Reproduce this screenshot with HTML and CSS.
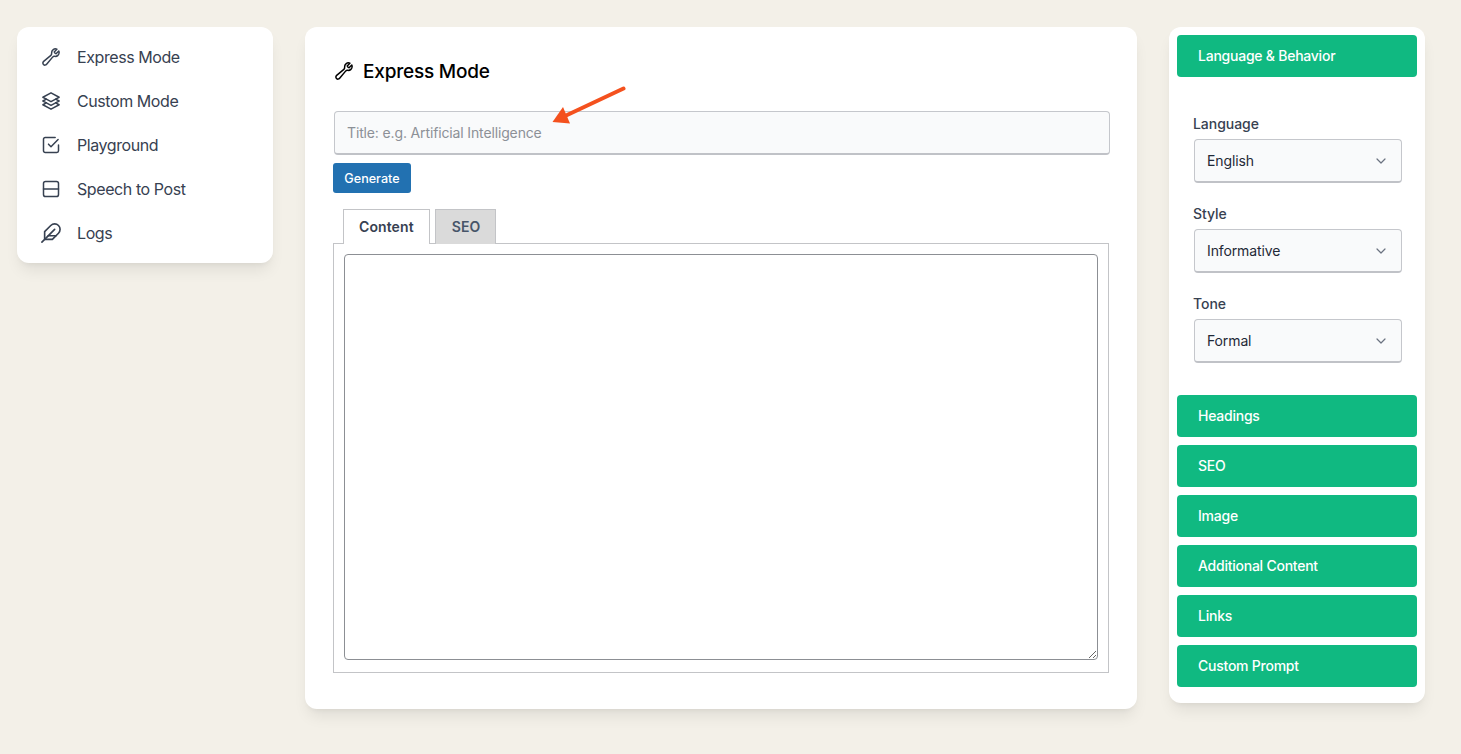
FILE: index.html
```html
<!DOCTYPE html>
<html lang="en">
<head>
<meta charset="utf-8">
<title>Express Mode</title>
<link rel="stylesheet" href="styles.css">
</head>
<body>
<div class="layout">
  <nav class="card sidebar">
    <a class="nav-item"><svg class="icon" viewBox="0 0 24 24"><path d="M21.75 6.75a4.5 4.5 0 01-4.884 4.484c-1.076-.091-2.264.071-2.95.904l-7.152 8.684a2.548 2.548 0 11-3.586-3.586l8.684-7.152c.833-.686.995-1.874.904-2.95a4.5 4.5 0 016.336-4.486l-3.276 3.276a3.004 3.004 0 002.25 2.25l3.276-3.276c.256.565.398 1.192.398 1.852z"/></svg><span>Express Mode</span></a>
    <a class="nav-item"><svg class="icon" viewBox="0 0 24 24"><path d="M6.429 9.75L2.25 12l4.179 2.25m0-4.5l5.571 3 5.571-3m-11.142 0L2.25 7.5 12 2.25l9.75 5.25-4.179 2.25m0 0L21.75 12l-4.179 2.25m0 0l4.179 2.25L12 21.75 2.25 16.5l4.179-2.25m11.142 0l-5.571 3-5.571-3"/></svg><span>Custom Mode</span></a>
    <a class="nav-item"><svg class="icon" viewBox="0 0 24 24"><path d="M9 11l3 3 8.5-8.5"/><path d="M21 12v7a2 2 0 01-2 2H5a2 2 0 01-2-2V5a2 2 0 012-2h12"/></svg><span>Playground</span></a>
    <a class="nav-item"><svg class="icon" viewBox="0 0 24 24"><rect x="3" y="3" width="18" height="18" rx="2.5"/><path d="M3 12h18"/></svg><span>Speech to Post</span></a>
    <a class="nav-item"><svg class="icon" viewBox="1 1 22 22"><path d="M20.24 12.24a6 6 0 0 0-8.49-8.49L5 10.5V19h8.5z"/><path d="M16 8 2 22"/><path d="M17.5 15H9"/></svg><span>Logs</span></a>
  </nav>

  <main class="card main">
    <h1 class="title"><svg class="icon" viewBox="0 0 24 24"><path d="M21.75 6.75a4.5 4.5 0 01-4.884 4.484c-1.076-.091-2.264.071-2.95.904l-7.152 8.684a2.548 2.548 0 11-3.586-3.586l8.684-7.152c.833-.686.995-1.874.904-2.95a4.5 4.5 0 016.336-4.486l-3.276 3.276a3.004 3.004 0 002.25 2.25l3.276-3.276c.256.565.398 1.192.398 1.852z"/></svg>Express Mode</h1>
    <div class="title-field">
      <input class="title-input" type="text" placeholder="Title: e.g. Artificial Intelligence">
      <svg class="arrow" viewBox="0 0 80 44" width="80" height="44"><path class="arrow-line" d="M71.5 2.5 13 30"/><path class="arrow-head" d="M0.5 36 11 21 18 37.5z"/></svg>
    </div>
    <button class="generate" type="button">Generate</button>
    <div class="tabs">
      <div class="tab active">Content</div>
      <div class="tab">SEO</div>
    </div>
    <div class="tab-panel"><textarea class="editor"></textarea></div>
  </main>

  <aside class="card settings">
    <div class="acc">Language &amp; Behavior</div>
    <div class="fields">
      <div class="field">
        <label class="field-label">Language</label>
        <div class="select-wrap"><select class="select"><option>English</option></select><svg class="chevron" viewBox="0 0 20 20"><path d="M5 7.5l5 5 5-5"/></svg></div>
      </div>
      <div class="field">
        <label class="field-label">Style</label>
        <div class="select-wrap"><select class="select"><option>Informative</option></select><svg class="chevron" viewBox="0 0 20 20"><path d="M5 7.5l5 5 5-5"/></svg></div>
      </div>
      <div class="field">
        <label class="field-label">Tone</label>
        <div class="select-wrap"><select class="select"><option>Formal</option></select><svg class="chevron" viewBox="0 0 20 20"><path d="M5 7.5l5 5 5-5"/></svg></div>
      </div>
    </div>
    <div class="acc-list">
      <div class="acc">Headings</div>
      <div class="acc">SEO</div>
      <div class="acc">Image</div>
      <div class="acc">Additional Content</div>
      <div class="acc">Links</div>
      <div class="acc">Custom Prompt</div>
    </div>
  </aside>
</div>
</body>
</html>
```

FILE: styles.css
```css
* { box-sizing: border-box; }
html, body { margin: 0; height: 100%; }
body {
  background: #f3f0e8;
  font-family: Inter, "Liberation Sans", sans-serif;
  color: #374151;
  overflow: hidden;
}
.layout {
  display: flex;
  align-items: flex-start;
  gap: 32px;
  padding: 27px 0 0 17px;
}
.card {
  background: #fff;
  border-radius: 12px;
  box-shadow: 0 10px 15px -3px rgba(0,0,0,.08), 0 4px 6px -4px rgba(0,0,0,.08);
}
.icon {
  width: 20px;
  height: 20px;
  fill: none;
  stroke: currentColor;
  stroke-width: 1.8;
  stroke-linecap: round;
  stroke-linejoin: round;
  flex: none;
}
.sidebar {
  width: 256px;
  padding: 8px 0;
  display: flex;
  flex-direction: column;
}
.nav-item {
  height: 44px;
  display: flex;
  align-items: center;
  gap: 16px;
  padding-left: 24px;
  font-size: 16px;
  letter-spacing: -0.42px;
  color: #374151;
}
.main {
  width: 832px;
  height: 682px;
  padding: 28px 27px 0 28px;
}
.title {
  margin: 0;
  height: 32px;
  display: flex;
  align-items: center;
  gap: 9px;
  padding-left: 1px;
  font-size: 19px;
  letter-spacing: -0.2px;
  font-weight: 500;
  color: #000;
}
.title-field {
  position: relative;
  margin-top: 24px;
  padding-left: 1px;
}
.title-input {
  display: block;
  width: 776px;
  height: 44px;
  padding: 0 12px;
  font: 14px Inter, "Liberation Sans", sans-serif;
  letter-spacing: -0.14px;
  background: #f9fafb;
  border: 1px solid #c5c7cc;
  border-bottom: 2px solid #c0c2c7;
  border-radius: 4px;
  color: #111827;
}
.title-input::placeholder { color: #8c9097; opacity: 1; }
.arrow {
  position: absolute;
  left: 219px;
  top: -25px;
}
.arrow-line { stroke: #f4511e; stroke-width: 4; stroke-linecap: round; fill: none; }
.arrow-head { fill: #f4511e; }
.generate {
  display: block;
  margin-top: 8px;
  width: 78px;
  height: 30px;
  padding: 0;
  background: #2271b1;
  color: #fff;
  border: 0;
  border-radius: 3px;
  font: 500 12.6px Inter, "Liberation Sans", sans-serif;
}
.tabs {
  display: flex;
  gap: 5px;
  margin-top: 16px;
  padding-left: 10px;
  position: relative;
  z-index: 1;
  margin-bottom: -1px;
}
.tab {
  height: 35px;
  padding: 0 15px 2px 16px;
  display: flex;
  align-items: center;
  background: #dadada;
  border: 1px solid #c3c4c7;
  border-bottom: 0;
  font-size: 14px;
  letter-spacing: 0.1px;
  font-weight: 600;
  color: #475569;
}
.tab.active {
  padding-left: 15px;
  background: #fff;
  color: #374151;
}
.tab-panel {
  width: 776px;
  height: 430px;
  border: 1px solid #c3c4c7;
  padding: 10px;
}
.editor {
  display: block;
  width: 754px;
  height: 406px;
  border: 1px solid #8c8f94;
  border-radius: 4px;
  background: #fff;
  resize: both;
}
.settings {
  width: 256px;
  height: 676px;
  padding: 8px;
}
.acc {
  height: 42px;
  display: flex;
  align-items: center;
  padding: 0 0 2px 21px;
  background: #10b981;
  color: #fff;
  border-radius: 4px;
  font-size: 14px;
  letter-spacing: -0.24px;
  font-weight: 500;
}
.fields {
  padding: 37px 15px 32px 16px;
  display: flex;
  flex-direction: column;
  gap: 21px;
}
.field-label {
  display: block;
  height: 20px;
  line-height: 20px;
  font-size: 14px;
  font-weight: 500;
  letter-spacing: -0.05px;
  color: #374151;
  margin-bottom: 5px;
}
.select-wrap {
  position: relative;
  padding-left: 1px;
}
.select {
  display: block;
  width: 208px;
  height: 44px;
  padding: 0 12px;
  appearance: none;
  background: #f9fafb;
  border: 1px solid #c5c7cc;
  border-bottom: 2px solid #c0c2c7;
  border-radius: 4px;
  font: 14px Inter, "Liberation Sans", sans-serif;
  letter-spacing: -0.12px;
  color: #1f2937;
}
.chevron {
  position: absolute;
  right: 13px;
  top: 14px;
  width: 16px;
  height: 16px;
  fill: none;
  stroke: #6b7280;
  stroke-width: 1.5;
  stroke-linecap: round;
  stroke-linejoin: round;
  pointer-events: none;
}
.acc-list {
  display: flex;
  flex-direction: column;
  gap: 8px;
}
```
